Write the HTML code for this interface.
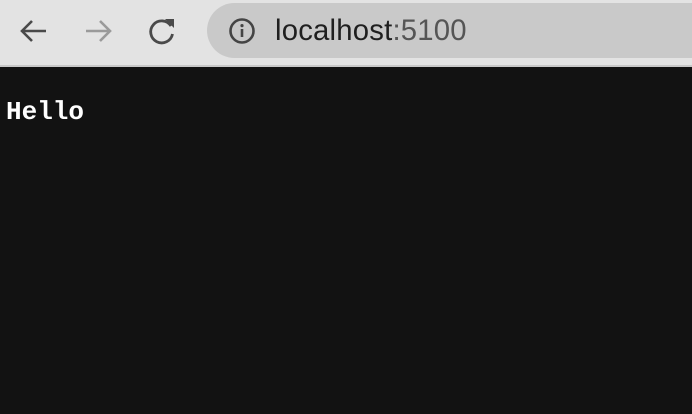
<!DOCTYPE html>
<html><head><style>
*{margin:0;padding:0}
body{width:692px;height:414px;background:#121212;overflow:hidden;position:relative;font-family:"Liberation Sans",sans-serif}
.bar{position:absolute;left:0;top:0;width:692px;height:65px;background:#e3e3e3;border-bottom:2px solid #c8c8c8}
.url{position:absolute;left:207px;top:3px;width:520px;height:55px;border-radius:28px;background:#c9c9c9}
.t{position:absolute;left:275px;top:14px;font-size:29.3px;color:#1f1f1f;letter-spacing:0.2px}
.t span{color:#555}
.h{position:absolute;left:6px;top:97px;font-family:"Liberation Mono",monospace;font-weight:bold;font-size:26px;color:#fff}
svg{position:absolute}
</style></head><body>
<div class="bar"></div>
<svg style="left:18px;top:16px" width="32" height="30" viewBox="0 0 32 30"><path d="M28 15H4M14 5L4 15l10 10" stroke="#4a4a4a" stroke-width="2.6" fill="none"/></svg>
<svg style="left:82px;top:16px" width="32" height="30" viewBox="0 0 32 30"><path d="M4 15h24M18 5l10 10-10 10" stroke="#9a9a9a" stroke-width="2.6" fill="none"/></svg>
<svg style="left:146px;top:15px" width="32" height="32" viewBox="0 0 32 32"><path d="M25 11A11 11 0 1 0 26.5 19" stroke="#4a4a4a" stroke-width="2.8" fill="none"/><path d="M19 4h9v9z" fill="#4a4a4a"/></svg>
<div class="url"></div>
<svg style="left:228px;top:17px" width="30" height="30" viewBox="0 0 30 30"><circle cx="14" cy="14" r="11.5" stroke="#444" stroke-width="2.6" fill="none"/><rect x="12.7" y="12" width="2.6" height="8" fill="#444"/><circle cx="14" cy="8.6" r="1.6" fill="#444"/></svg>
<div class="t">localhost<span>:5100</span></div>
<div class="h">Hello</div>
</body></html>
